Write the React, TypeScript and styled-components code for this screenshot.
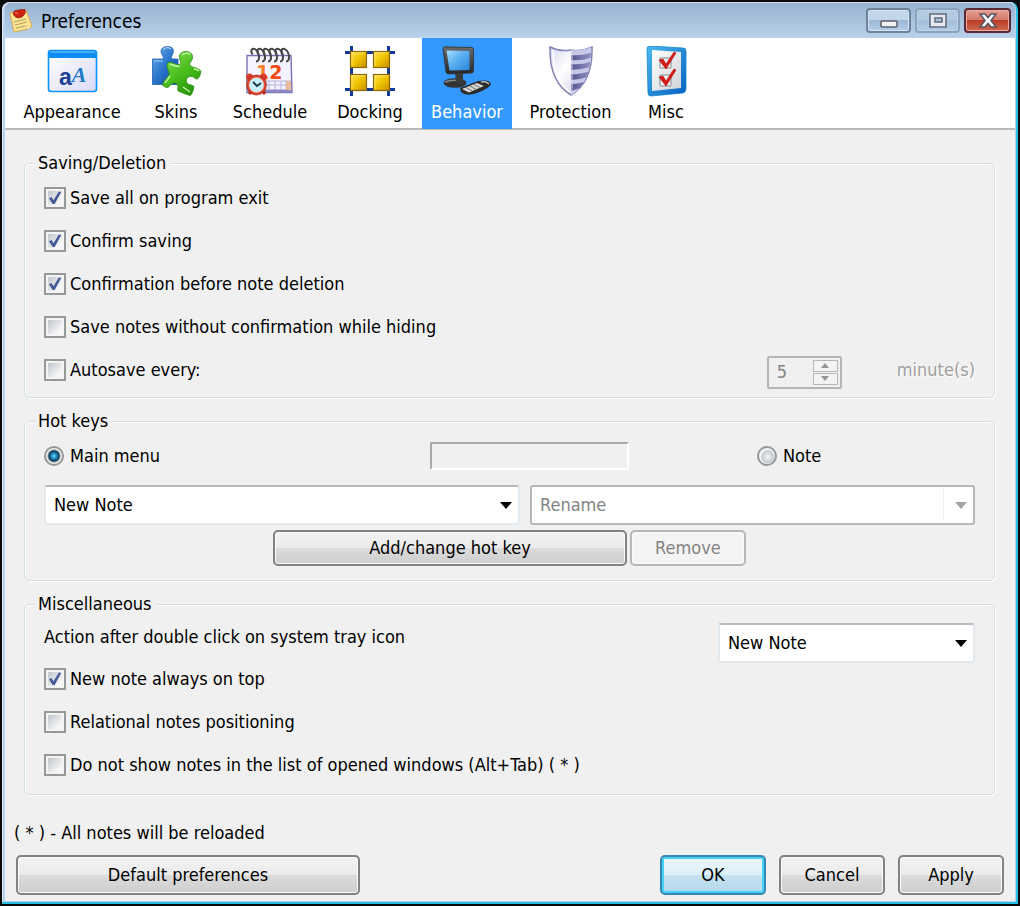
import React, { useId, useState } from "react";
import styled, { createGlobalStyle, css } from "styled-components";

const GlobalStyle = createGlobalStyle`
  * { box-sizing: border-box; }
  html { background: #0b0b0d; }
  body {
    margin: 0;
    color: #000;
    font-family: "DejaVu Sans Condensed", Tahoma, "DejaVu Sans", sans-serif;
    font-size: 18px;
    line-height: 24px;
  }
  button, input, select { font: inherit; color: inherit; margin: 0; }
`;

const Shell = styled.div`
  min-height: 100vh;
  padding: 2px;
  display: flex;
  background: #0b0b0d;
`;

const Window = styled.main`
  flex: 1;
  min-width: 0;
  display: flex;
  flex-direction: column;
  border: solid #25bfe6;
  border-width: 0 2px 2px 0;
  border-radius: 8px 8px 0 0;
  background: #b9d1ea;
  padding: 0 1px 1px 3px;
  box-shadow: inset 1px 1px 0 #dfe8f2;
`;

const TitleBar = styled.header`
  height: 36px;
  display: flex;
  align-items: center;
  gap: 4px;
  padding: 0 4px;
  border-radius: 6px 6px 0 0;
  border-top: 1px solid #d4dce6;
  background: linear-gradient(#98b3d1, #b9d1ea);
`;

const Title = styled.h1`
  flex: 1;
  margin: 0;
  padding-left: 4px;
  font-size: 19px;
  font-weight: 400;
`;

type CaptionKind = "normal" | "dim" | "close";

const CaptionButton = styled.button<{ $kind: CaptionKind }>`
  width: ${(p) => (p.$kind === "close" ? 47 : 45)}px;
  height: 25px;
  padding: 0;
  display: grid;
  place-items: center;
  border-radius: 4px;
  border: 2px solid #6f829d;
  background: linear-gradient(#c3d5e9 0 45%, #9db8d5 50%, #b5cfea);
  box-shadow: inset 0 0 0 1px #d5e3f1;
  ${(p) =>
    p.$kind === "dim" &&
    css`
      border-color: #8ba3bf;
      background: linear-gradient(#b4cae1 0 45%, #a5bfdb 50%, #b3cde8);
      box-shadow: inset 0 0 0 1px #bed3e8;
    `}
  ${(p) =>
    p.$kind === "close" &&
    css`
      border-color: #5c2734;
      background: linear-gradient(#e3a194, #d5796a 46%, #b83b25 50%, #cf6a50);
      box-shadow: inset 0 0 0 1px #e8aca0;
    `}
`;

const Toolbar = styled.nav`
  display: flex;
  height: 92px;
  padding-left: 9px;
  background: #fff;
  border-bottom: 2px solid #b9b9b9;
`;

const Tab = styled.button<{ $width: number; $active: boolean }>`
  width: ${(p) => p.$width}px;
  height: 91px;
  padding: 8px 0 0;
  border: 0;
  display: flex;
  flex-direction: column;
  align-items: center;
  white-space: nowrap;
  line-height: 28px;
  color: ${(p) => (p.$active ? "#fff" : "#000")};
  background: ${(p) => (p.$active ? "#3399ff" : "transparent")};
`;

const TabIcon = styled.svg`
  width: 52px;
  height: 52px;
  flex: none;
`;

const Body = styled.form`
  flex: 1;
  display: flex;
  flex-direction: column;
  background: #f0f0f0;
  padding: 21px 11px 6px;
`;

const Groups = styled.div`
  display: flex;
  flex-direction: column;
  gap: 11px;
  padding: 0 9px 0 8px;
`;

const Group = styled.fieldset<{ $bottom: number }>`
  min-width: 0;
  margin: 0;
  padding: 1px 19px ${(p) => p.$bottom}px;
  border: 1px solid #d3dfe7;
  border-radius: 5px;
  box-shadow: inset 1px 1px 0 #fff, 1px 1px 0 #fff;
`;

const Legend = styled.legend`
  margin-left: -9px;
  padding: 0 4px 0 3px;
  background: #f0f0f0;
`;

const OptionRow = styled.div`
  min-height: 43px;
  display: flex;
  align-items: center;
`;

const OptionLabel = styled.label`
  display: flex;
  align-items: center;
  gap: 4px;
`;

const RadioLabel = styled(OptionLabel)`
  gap: 6px;
`;

const BoxStack = styled.span`
  display: grid;
  flex: none;
  > * { grid-area: 1 / 1; }
`;

const CheckInput = styled.input`
  appearance: none;
  width: 22px;
  height: 22px;
  padding: 2px;
  border: 2px solid #979898;
  background: linear-gradient(135deg, #c0c5cc, #f6f6f6 80%) content-box, #f4f4f4;
  & + svg { visibility: hidden; pointer-events: none; }
  &:checked + svg { visibility: visible; }
`;

const RadioInput = styled.input`
  appearance: none;
  width: 20px;
  height: 20px;
  border: 2px solid #979898;
  border-radius: 50%;
  background: radial-gradient(circle at 55% 55%, #eceef0 0 1px, #c4c9cf 6px, #f4f4f4 7px);
  &:checked {
    background: radial-gradient(circle at 50% 50%, #7fdcfb 0, #2c9bd0 2px, #16648f 4px, #12364f 5px, #eef0f1 7px);
  }
`;

const Spinner = styled.div`
  width: 75px;
  height: 33px;
  margin: 5px 55px 0 auto;
  padding: 2px;
  display: flex;
  border: 2px solid #b3b7ba;
  border-radius: 2px;
`;

const SpinnerInput = styled.input`
  flex: 1;
  min-width: 0;
  padding: 0 0 0 6px;
  border: 0;
  background: transparent;
  color: #838383;
`;

const SpinnerArrows = styled.div`
  width: 25px;
  display: grid;
  grid-template-rows: 1fr 1fr;
  gap: 1px;
`;

const SpinnerArrow = styled.button`
  min-height: 0;
  padding: 0;
  display: grid;
  place-items: center;
  border: 1px solid #b4b8bc;
  background: #f3f3f3;
`;

const DisabledText = styled.span`
  color: #a0a0a0;
  text-shadow: 1px 1px 0 #fff;
`;

const HotkeyRow = styled.div`
  height: 43px;
  display: grid;
  grid-template-columns: 386fr 327fr 218fr;
  align-items: center;
`;

const HotkeyInput = styled.input`
  width: 199px;
  height: 28px;
  border: 2px solid;
  border-color: #a9a9a9 #fff #fff #a9a9a9;
  background: #f0f0f0;
`;

const ComboRow = styled.div`
  display: grid;
  grid-template-columns: 476fr 445fr;
  gap: 10px;
  margin-top: 8px;
`;

const ComboFrame = styled.span<{ $disabled?: boolean }>`
  height: 40px;
  display: grid;
  align-items: center;
  border: 2px solid #e2e9ee;
  border-top-color: #b8babe;
  border-radius: 3px;
  background: #fff;
  > * { grid-area: 1 / 1; }
  > svg {
    justify-self: end;
    margin-right: 6px;
    pointer-events: none;
  }
  ${(p) =>
    p.$disabled &&
    css`
      border-color: #b5b7ba;
      color: #838383;
    `}
`;

const ComboSelect = styled.select`
  appearance: none;
  width: 100%;
  height: 36px;
  padding: 0 30px 0 8px;
  border: 0;
  background: transparent;
  color: inherit;
  opacity: 1;
  &:disabled {
    background:
      linear-gradient(#ececec, #ececec) calc(100% - 29px) 2px / 1px 32px no-repeat,
      linear-gradient(#f2f2f2, #f2f2f2) 2px 2px / 1px 32px no-repeat;
  }
`;

const ActionRow = styled.div`
  display: flex;
  justify-content: center;
  gap: 3px;
  margin-top: 5px;
`;

type ButtonTone = "plain" | "primary";

const PushButton = styled.button<{ $tone?: ButtonTone; $width: string }>`
  width: ${(p) => p.$width};
  height: 40px;
  padding: 0;
  border: 2px solid #828282;
  border-radius: 5px;
  background: linear-gradient(#f3f3f3, #ebebeb 49%, #dcdcdc 51%, #cdcdcd);
  box-shadow: inset 0 0 0 1px #fafafa;
  ${ActionRow} & { height: 36px; }
  &:disabled {
    border-color: #b3b8bb;
    background: #f4f4f4;
    color: #838383;
  }
  ${(p) =>
    p.$tone === "primary" &&
    css`
      border-color: #3588b3;
      background: linear-gradient(#edf6fb, #ddeff8 49%, #c5e2f1 51%, #b3d8eb);
      box-shadow: inset 0 0 0 2px #45d3f7;
    `}
`;

const MiscGrid = styled.div`
  display: grid;
  grid-template-columns: 1fr 257px;
  align-items: start;
`;

const ActionLabel = styled.label`
  display: flex;
  align-items: center;
  height: 40px;
`;

const TrayCombo = styled.div`
  padding-top: 6px;
`;

const Footer = styled.footer`
  margin-top: auto;
`;

const FootNote = styled.p`
  margin: 0 0 10px -2px;
`;

const FooterButtons = styled.div`
  display: flex;
  gap: 13px;
  > :first-child { margin-right: auto; }
`;

function Check({ label, checked = false }: { label: string; checked?: boolean }) {
  const [on, setOn] = useState(checked);
  const id = useId();
  return (
    <OptionLabel htmlFor={id}>
      <BoxStack>
        <CheckInput id={id} type="checkbox" checked={on} onChange={() => setOn(!on)} />
        <svg width="22" height="22" viewBox="0 0 22 22" aria-hidden="true">
          <path d="M5 11.2 7.5 10l2 3.2L14.8 4.6l2.4.4-6.5 12H8.6z" fill="#455a96" />
        </svg>
      </BoxStack>
      {label}
    </OptionLabel>
  );
}

function Combo({ id, value, label, disabled }: { id: string; value: string; label?: string; disabled?: boolean }) {
  return (
    <ComboFrame $disabled={disabled}>
      <ComboSelect id={id} aria-label={label} disabled={disabled} defaultValue={value}>
        <option>{value}</option>
      </ComboSelect>
      <svg width="12" height="7" viewBox="0 0 12 7" aria-hidden="true">
        <path d="M0 0h12L6 7z" fill={disabled ? "#a3a3a3" : "#000"} />
      </svg>
    </ComboFrame>
  );
}

const NoteIcon = () => (
  <svg width="24" height="24" viewBox="0 0 24 24" aria-hidden="true">
    <path d="M1 4 17 1l6 16-4 3-14 3z" fill="#fbe595" stroke="#d7a94d" />
    <path d="m18.500 20.500-1.500-4 6 1z" fill="#fff6cd" stroke="#d7a94d" strokeWidth=".6" />
    <path d="m5 13 12-3M6 16l12-3M7 19l9-2" stroke="#b4a15d" strokeWidth="1.200" />
    <path d="M5 2.500c1-1.500 3-1 5-1.500s5-1.500 6 0 0 4-2 6-6 2.500-8 .5S4 4 5 2.500z" fill="#cf2414" stroke="#8c1b12" strokeWidth=".8" />
    <path d="M6 3.500q2 0 3 1.500" stroke="#ff9184" fill="none" />
  </svg>
);

const AppearanceIcon = () => (
  <TabIcon viewBox="0 0 52 52" aria-hidden="true">
    <defs>
      <linearGradient id="ap" x1="0" y1="0" x2="1" y2="1"><stop stopColor="#fff" /><stop offset="1" stopColor="#d9d9f6" /></linearGradient>
    </defs>
    <rect x="2.500" y="4.500" width="48" height="41" rx="2.500" fill="url(#ap)" stroke="#0a93fb" strokeWidth="1.600" />
    <path d="M3 6q0-2 2-2h43q2 0 2 2v6H3z" fill="#0d8cf2" />
    <path d="M4 6h45" stroke="#58b9ff" strokeWidth="1.500" />
    <text x="13" y="39" fontWeight="700">
      <tspan fontFamily="Liberation Sans, sans-serif" fontSize="23" fill="#1c3f92">a</tspan>
      <tspan fontFamily="Liberation Serif, serif" fontStyle="italic" fontSize="22" dy="-3" fill="#2179c8">A</tspan>
    </text>
  </TabIcon>
);

const SkinsIcon = () => (
  <TabIcon viewBox="0 0 52 52" aria-hidden="true">
    <defs>
      <linearGradient id="skB" x1="0" y1="0" x2="1" y2="1"><stop stopColor="#6aaeea" /><stop offset=".5" stopColor="#2b76cd" /><stop offset="1" stopColor="#0c3f96" /></linearGradient>
      <linearGradient id="skG" x1="0" y1="0" x2=".6" y2="1"><stop stopColor="#86de58" /><stop offset=".6" stopColor="#48bd1b" /><stop offset="1" stopColor="#2a960d" /></linearGradient>
    </defs>
    <path d="M2.500 13H12c2 0 1.500-2 .5-3.500C9 4 12 .5 17.500.5S25 4 22 9.500C21 11 21 13 23 13h5v25.500H2.500z" fill="url(#skB)" stroke="#245eb0" strokeWidth=".8" />
    <path d="M13 4q3-4 8-1M4 15h9" stroke="#a3d2f6" strokeWidth="1.200" fill="none" />
    <path d="M18 16.500c4-1 6 2 10 2 3 0 3-2 2-4.500C28 9 31 5.500 36 5.500c5 0 8 4 6 8-1.500 3-3 4-2 6 2 2.500 7 1.500 10.500 5 1 2-1 7-3 8.500-2 .5-3-2-5.500-2.500-4-.5-6 2-5.500 5 .5 4 4.500 2.500 7 4.500 1 2-1 7-3 9.500-4-.5-8-3-11.500-4-2-1-1.500-2.500-1-4.500 0-3-2-4.500-4.500-4-3 .5-3.500 4-6 4.500-2 0-4-1-5-2.500.5-4 5-7 6.500-10.500 1-4-4-7-1-12z" fill="url(#skG)" stroke="#278e13" strokeWidth=".8" />
    <path d="M19.500 18q5 2 10 2.500M32 9q3-3 8-1M44 23q3 0 5 2M20 30l-5 7M33 41l7 5" stroke="#c0f7a0" strokeWidth="1.400" fill="none" />
  </TabIcon>
);

const ScheduleIcon = () => (
  <TabIcon viewBox="0 0 52 52" aria-hidden="true">
    <path d="M3 9.500h44l1 37H3z" fill="#f4f3ff" stroke="#7872b4" strokeWidth="1.400" />
    <path d="M4 46.500h44l-1-3H4z" fill="#8e89c4" />
    <path d="M22 35h25M22 39h25M25 35v9M31 35v9M37 35v9M42 35v9" stroke="#b6b3dd" strokeWidth="1" />
    <path d="M42 35h5v9h-5z" fill="#e9bc9b" />
    {[0, 1, 2, 3, 4, 5].map((i) => (
      <path key={i} d={`M${12 + i * 6} 15.500c5 0 3-10-.5-12s-5.500 1-3 5`} fill="none" stroke="#454545" strokeWidth="2" />
    ))}
    <text x="12" y="33" fontFamily="DejaVu Sans, sans-serif" fontWeight="700" fontSize="19">
      <tspan fill="#ff7e28">1</tspan>
      <tspan fill="#f34812">2</tspan>
    </text>
    <path d="m5 48 4-4M21 48l-3-4" stroke="#b82716" strokeWidth="3" />
    <circle cx="5.500" cy="31" r="3.500" fill="#d83e2b" />
    <circle cx="19.500" cy="31" r="3.500" fill="#d83e2b" />
    <circle cx="12.500" cy="39" r="10" fill="#dd402a" stroke="#a52c1b" strokeWidth=".7" />
    <circle cx="12.500" cy="39" r="7.500" fill="#c8f0fa" stroke="#f5a495" strokeWidth=".7" />
    <path d="m9 36 4 4 4-3" fill="none" stroke="#1d3340" strokeWidth="1.800" />
  </TabIcon>
);

const DockingIcon = () => (
  <TabIcon viewBox="0 0 52 52" aria-hidden="true">
    <defs>
      <linearGradient id="dk" x1="0" y1="0" x2="1" y2="1"><stop stopColor="#ffe44a" /><stop offset=".5" stopColor="#efc300" /><stop offset="1" stopColor="#c48c00" /></linearGradient>
    </defs>
    <path d="M7.500 0v50M44.500 0v50M1 6.500h50M1 43.500h50" stroke="#123a9c" strokeWidth="3" />
    {[[6, 5], [29, 5], [6, 28], [29, 28]].map(([x, y]) => (
      <g key={`${x}-${y}`}>
        <rect x={x + 0.5} y={y + 0.5} width="16" height="16" fill="url(#dk)" stroke="#8d6a10" strokeWidth="1.200" />
        <path d={`M${x + 2} ${y + 15}V${y + 2}h13`} stroke="#ffe98a" fill="none" strokeWidth=".7" />
      </g>
    ))}
  </TabIcon>
);

const BehaviorIcon = () => (
  <TabIcon viewBox="0 0 52 52" aria-hidden="true">
    <defs>
      <linearGradient id="bh" x1="0" y1="0" x2="1" y2="1"><stop stopColor="#a6dcff" /><stop offset=".5" stopColor="#56adf0" /><stop offset="1" stopColor="#2a84da" /></linearGradient>
      <linearGradient id="bhF" x1="0" y1="0" x2="0" y2="1"><stop stopColor="#6b6b6b" /><stop offset="1" stopColor="#262626" /></linearGradient>
    </defs>
    <ellipse cx="14" cy="37" rx="11.500" ry="4.800" fill="#333" />
    <path d="M4 36q9-3.500 18 0" stroke="#8a8a8a" fill="none" strokeWidth="1.500" />
    <path d="M14 26h8v8l2 2q-5 3-9 0z" fill="#3a3a3a" />
    <path d="M2 2.500Q2 .8 4 .8l27 .7q1.500 0 1.500 2v21q0 2.500-2 2.500L7.500 28Q5.500 28 5 26z" fill="url(#bhF)" stroke="#303030" strokeWidth=".8" />
    <path d="m5.500 4.500 23 .5v19l-20 .5z" fill="url(#bh)" />
    <path d="m19 42 18-7q12-2 13 3-1 4-14 9-11 4-16-1z" fill="#2b2b2b" />
    <path d="m21 43 15-6 7 3-15 6.500z" fill="#d9d9d9" />
    <path d="m25 41.500 6 3.500m-2-5 6 3.500m-2-5 6 3" stroke="#858585" strokeWidth="1.200" />
    <path d="M40 36q5-1 8 2" stroke="#b9b9b9" fill="none" strokeWidth="1.500" />
  </TabIcon>
);

const ProtectionIcon = () => (
  <TabIcon viewBox="0 0 52 52" aria-hidden="true">
    <defs>
      <linearGradient id="prL" x1="0" y1="0" x2="1" y2="1"><stop stopColor="#d6d6f0" /><stop offset=".4" stopColor="#fff" /><stop offset="1" stopColor="#bfc0e3" /></linearGradient>
      <linearGradient id="prS" x1="0" y1="0" x2="1" y2="0"><stop stopColor="#555590" /><stop offset="1" stopColor="#9a9ac8" /></linearGradient>
      <clipPath id="prC"><path d="M26 4q11 1 20-3 1 36-20 48z" /></clipPath>
    </defs>
    <path d="M5 1q10 5 21 3 11 2 21-3 1 35-21 48Q4 36 5 1z" fill="url(#prL)" stroke="#8585b6" strokeWidth="1.500" />
    <g clipPath="url(#prC)">
      <path d="M26 0h24v50H26z" fill="#c8c9e9" />
      <path d="M26 9q11 1 22-3v5q-11 4-22 3zM26 18q11 1 22-3v5q-11 4-22 4zM26 28q11 1 22-4v5q-11 5-22 5zM26 38q9 0 18-4v5l-18 6z" fill="url(#prS)" />
      <path d="M27 3v46" stroke="#dcdcf4" />
    </g>
    <path d="M8 4q0 29 17 42" stroke="#fff" fill="none" strokeWidth="1.500" />
  </TabIcon>
);

const MiscIcon = () => (
  <TabIcon viewBox="0 0 52 52" aria-hidden="true">
    <defs>
      <linearGradient id="ms" x1="0" y1="0" x2="1" y2="1"><stop stopColor="#4ab9ee" /><stop offset="1" stopColor="#0560c2" /></linearGradient>
      <linearGradient id="msP" x1="0" y1="0" x2="1" y2="1"><stop stopColor="#fff" /><stop offset="1" stopColor="#cfd2d6" /></linearGradient>
    </defs>
    <path d="M10 0 43 2q3 0 3 3v38q0 3-3 4L11 50q-3 0-3-3L7 3q0-3 3-3z" fill="url(#ms)" stroke="#1786cd" strokeWidth=".8" />
    <path d="m12 4 29 2v36l-29 3z" fill="url(#msP)" />
    <g fill="#f4f4f4" stroke="#a7a7a7" strokeWidth="1.500">
      <rect x="20" y="12" width="11" height="10" rx="1" />
      <rect x="20" y="29" width="11" height="11" rx="1" />
    </g>
    <path d="m19 14 4-1 3 5 8-12 2 1-10 16zM19 31l4-1 3 5 8-12 2 1-10 16z" fill="#d91916" stroke="#a40f0f" strokeWidth=".6" />
  </TabIcon>
);

const tabs = [
  { label: "Appearance", width: 116, Icon: AppearanceIcon },
  { label: "Skins", width: 92, Icon: SkinsIcon },
  { label: "Schedule", width: 96, Icon: ScheduleIcon },
  { label: "Docking", width: 104, Icon: DockingIcon },
  { label: "Behavior", width: 90, Icon: BehaviorIcon },
  { label: "Protection", width: 117, Icon: ProtectionIcon },
  { label: "Misc", width: 74, Icon: MiscIcon },
];

export default function App() {
  const [active, setActive] = useState("Behavior");
  const [target, setTarget] = useState("main");
  return (
    <>
      <GlobalStyle />
      <Shell>
        <Window>
          <TitleBar>
            <NoteIcon />
            <Title>Preferences</Title>
            <CaptionButton $kind="normal" type="button" aria-label="Minimize">
              <svg width="20" height="18" viewBox="0 0 20 18">
                <rect x="2" y="9" width="16" height="6" rx="1" fill="#f1f1f1" stroke="#5c6370" strokeWidth="1.600" />
              </svg>
            </CaptionButton>
            <CaptionButton $kind="dim" type="button" aria-label="Maximize">
              <svg width="20" height="18" viewBox="0 0 20 18">
                <path d="M2 2h16v13H2zM7 6v4h7V6z" fill="#e6e9ed" fillRule="evenodd" stroke="#626d7d" strokeWidth="1.600" />
              </svg>
            </CaptionButton>
            <CaptionButton $kind="close" type="button" aria-label="Close">
              <svg width="20" height="18" viewBox="0 0 20 18">
                <path d="M2 2h5l3 3.500L13 2h5l-5 6.500 5 6.500h-5l-3-3.500L7 15H2l5-6.500z" fill="#f7f7f7" stroke="#5a5461" strokeWidth="1.500" />
              </svg>
            </CaptionButton>
          </TitleBar>
          <Toolbar>
            {tabs.map(({ label, width, Icon }) => (
              <Tab key={label} type="button" $width={width} $active={label === active} onClick={() => setActive(label)}>
                <Icon />
                {label}
              </Tab>
            ))}
          </Toolbar>
          <Body onSubmit={(e) => e.preventDefault()}>
            <Groups>
              <Group $bottom={6}>
                <Legend>Saving/Deletion</Legend>
                <OptionRow><Check label="Save all on program exit" checked /></OptionRow>
                <OptionRow><Check label="Confirm saving" checked /></OptionRow>
                <OptionRow><Check label="Confirmation before note deletion" checked /></OptionRow>
                <OptionRow><Check label="Save notes without confirmation while hiding" /></OptionRow>
                <OptionRow>
                  <Check label="Autosave every:" />
                  <Spinner>
                    <SpinnerInput aria-label="Autosave interval in minutes" defaultValue="5" disabled />
                    <SpinnerArrows>
                      <SpinnerArrow type="button" aria-label="Increase" disabled>
                        <svg width="8" height="5" viewBox="0 0 8 5"><path d="M0 5h8L4 0z" fill="#929599" /></svg>
                      </SpinnerArrow>
                      <SpinnerArrow type="button" aria-label="Decrease" disabled>
                        <svg width="8" height="5" viewBox="0 0 8 5"><path d="M0 0h8L4 5z" fill="#929599" /></svg>
                      </SpinnerArrow>
                    </SpinnerArrows>
                  </Spinner>
                  <DisabledText>minute(s)</DisabledText>
                </OptionRow>
              </Group>
              <Group $bottom={14}>
                <Legend>Hot keys</Legend>
                <HotkeyRow>
                  <RadioLabel>
                    <RadioInput type="radio" name="target" checked={target === "main"} onChange={() => setTarget("main")} />
                    Main menu
                  </RadioLabel>
                  <HotkeyInput aria-label="Hot key" readOnly />
                  <RadioLabel>
                    <RadioInput type="radio" name="target" checked={target === "note"} onChange={() => setTarget("note")} />
                    Note
                  </RadioLabel>
                </HotkeyRow>
                <ComboRow>
                  <Combo id="menu-command" label="Main menu command" value="New Note" />
                  <Combo id="note-command" label="Note command" value="Rename" disabled />
                </ComboRow>
                <ActionRow>
                  <PushButton type="button" $width="38%">Add/change hot key</PushButton>
                  <PushButton type="button" $width="116px" disabled>Remove</PushButton>
                </ActionRow>
              </Group>
              <Group $bottom={8}>
                <Legend>Miscellaneous</Legend>
                <MiscGrid>
                  <div>
                    <ActionLabel htmlFor="tray-action">Action after double click on system tray icon</ActionLabel>
                    <OptionRow><Check label="New note always on top" checked /></OptionRow>
                    <OptionRow><Check label="Relational notes positioning" /></OptionRow>
                    <OptionRow><Check label="Do not show notes in the list of opened windows (Alt+Tab) ( * )" /></OptionRow>
                  </div>
                  <TrayCombo><Combo id="tray-action" value="New Note" /></TrayCombo>
                </MiscGrid>
              </Group>
            </Groups>
            <Footer>
              <FootNote>( * ) - All notes will be reloaded</FootNote>
              <FooterButtons>
                <PushButton type="button" $width="344px">Default preferences</PushButton>
                <PushButton type="submit" $tone="primary" $width="106px">OK</PushButton>
                <PushButton type="button" $width="106px">Cancel</PushButton>
                <PushButton type="button" $width="106px">Apply</PushButton>
              </FooterButtons>
            </Footer>
          </Body>
        </Window>
      </Shell>
    </>
  );
}
